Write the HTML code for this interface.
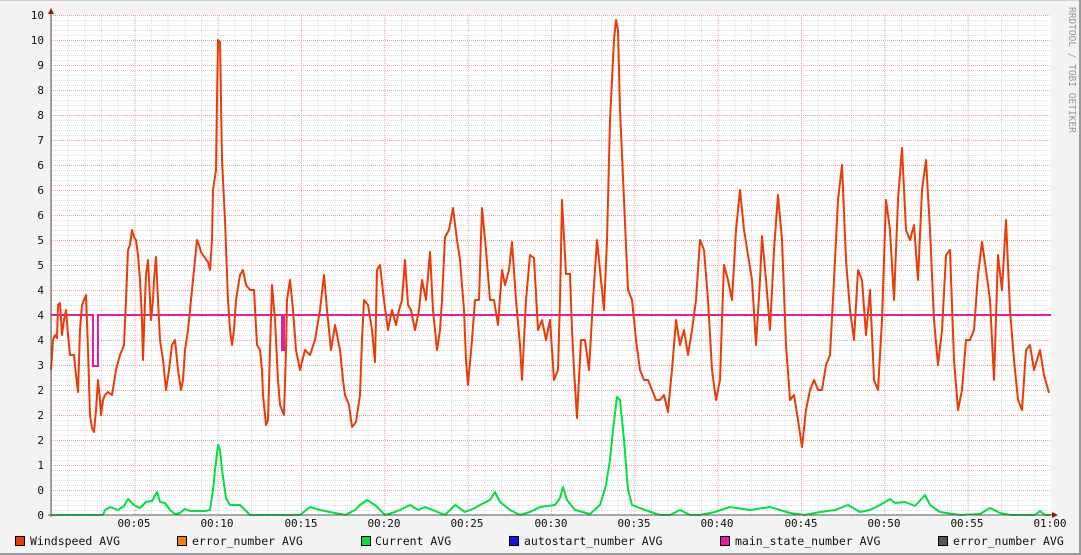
<!DOCTYPE html>
<html><head><meta charset="utf-8"><style>
html,body{margin:0;padding:0;background:#f3f3f3;}
svg{display:block;font-family:"DejaVu Sans Mono","Liberation Mono",monospace;}
</style></head><body>
<svg width="1081" height="555" viewBox="0 0 1081 555" xmlns="http://www.w3.org/2000/svg">
<rect x="0" y="0" width="1081" height="555" fill="#f3f3f3"/>
<rect x="0" y="0" width="1081" height="1" fill="#d0d0d0"/>
<rect x="1079" y="0" width="2" height="555" fill="#9a9a9a"/>
<rect x="0" y="553" width="1081" height="2" fill="#9a9a9a"/>
<rect x="51" y="15" width="1000" height="500" fill="#ffffff"/>
<defs>
<pattern id="mh" x="51" y="15" width="1000" height="5" patternUnits="userSpaceOnUse"><line x1="0" y1="0.5" x2="1000" y2="0.5" stroke="#dcdcdc" stroke-dasharray="1,1"/></pattern>
<pattern id="mv" x="51" y="15" width="16.667" height="500" patternUnits="userSpaceOnUse"><line x1="0.5" y1="0" x2="0.5" y2="500" stroke="#dcdcdc" stroke-dasharray="1,1"/></pattern>
<pattern id="Mh" x="51" y="15" width="1000" height="25" patternUnits="userSpaceOnUse"><line x1="0" y1="0.5" x2="1000" y2="0.5" stroke="#eba5a5" stroke-dasharray="1,1"/></pattern>
<pattern id="Mv" x="51" y="15" width="83.333" height="500" patternUnits="userSpaceOnUse"><line x1="0.5" y1="0" x2="0.5" y2="500" stroke="#eba5a5" stroke-dasharray="1,1"/></pattern>
</defs>
<rect x="51" y="15" width="1000" height="500" fill="url(#mh)"/>
<rect x="51" y="15" width="1000" height="500" fill="url(#mv)"/>
<rect x="51" y="15" width="1000" height="500" fill="url(#Mh)"/>
<rect x="51" y="15" width="1000" height="500" fill="url(#Mv)"/>
<g font-size="11" fill="#111" text-anchor="end">
<text x="44" y="19">10</text><text x="44" y="44">10</text><text x="44" y="69">9</text><text x="44" y="94">8</text><text x="44" y="119">8</text><text x="44" y="144">7</text><text x="44" y="169">6</text><text x="44" y="194">6</text><text x="44" y="219">6</text><text x="44" y="244">5</text><text x="44" y="269">5</text><text x="44" y="294">4</text><text x="44" y="319">4</text><text x="44" y="344">4</text><text x="44" y="369">3</text><text x="44" y="394">2</text><text x="44" y="419">2</text><text x="44" y="444">2</text><text x="44" y="469">1</text><text x="44" y="494">0</text><text x="44" y="519">0</text>
</g>
<g font-size="11" fill="#111" text-anchor="middle">
<text x="134" y="527">00:05</text><text x="217" y="527">00:10</text><text x="301" y="527">00:15</text><text x="384" y="527">00:20</text><text x="467" y="527">00:25</text><text x="551" y="527">00:30</text><text x="634" y="527">00:35</text><text x="717" y="527">00:40</text><text x="801" y="527">00:45</text><text x="884" y="527">00:50</text><text x="967" y="527">00:55</text><text x="1050" y="527">01:00</text>
</g>
<text transform="translate(1069,7) rotate(90)" font-size="9.5" fill="#999">RRDTOOL / TOBI OETIKER</text>
<polyline fill="none" stroke="#00e040" stroke-width="2" stroke-linejoin="round" points="51,515 103,515 105,510 110,507 118,510 124,506 128,499 134,505 140,508 146,502 152,501 157,492 160,502 165,503 170,510 175,514 180,513 185,509 190,511 205,511 210,510 213,490 215,470 218,445 220,450 222,470 226,498 230,505 240,505 245,510 250,515 300,515 305,511 310,507 320,510 330,512 345,515 355,510 360,505 367,500 375,505 385,515 395,512 400,510 410,505 418,510 425,507 435,511 445,515 450,510 455,505 465,512 475,508 480,505 490,500 495,492 500,502 510,510 520,515 530,512 540,507 555,505 560,498 563,487 567,500 575,510 590,514 600,505 606,485 610,460 613,430 617,397 620,400 622,420 624,440 628,490 632,505 645,510 660,515 670,515 680,510 690,515 700,515 715,512 730,507 750,510 770,507 790,513 805,515 820,512 835,510 848,505 860,512 870,510 880,505 890,499 895,503 905,502 915,506 925,495 930,505 940,512 960,515 980,514 990,508 1000,513 1010,515 1035,515 1040,511 1045,515 1051,515"/>
<polyline fill="none" stroke="#e41ea0" stroke-width="2" points="51,315 93,315 93,366 98,366 98,315 282,315 282,350 284,350 284,315 1051,315"/>
<polyline fill="none" stroke="#e83c0a" stroke-width="2" stroke-linejoin="round" points="51,370 53,340 55,335 57,338 58,305 60,303 62,335 64,320 66,310 68,335 70,355 74,355 76,375 78,392 80,330 82,305 86,295 88,350 90,415 92,428 94,432 96,410 98,380 100,400 101,415 103,400 105,395 108,392 112,395 116,370 120,355 124,345 126,300 128,250 130,245 132,230 134,237 136,240 138,255 140,280 142,320 143,360 145,300 146,275 148,260 151,320 153,300 154,280 156,257 158,300 160,340 163,360 166,390 169,370 172,345 175,340 178,370 181,390 183,380 185,350 188,330 191,300 193,280 197,240 199,245 201,252 205,258 208,262 210,270 212,240 213,190 216,170 217,100 218,40 220,42 221,100 222,160 225,220 228,300 230,330 232,345 234,330 236,300 240,275 243,270 246,285 250,290 254,290 257,345 260,350 262,370 263,395 266,425 268,420 270,350 272,285 275,320 278,380 280,405 284,415 286,350 287,300 290,280 293,310 296,350 300,370 305,350 310,355 315,340 320,310 324,275 327,310 331,350 335,325 340,350 343,380 345,395 349,405 352,427 356,422 360,395 362,340 364,300 368,305 372,330 375,362 377,270 380,265 384,300 388,330 392,310 396,325 399,310 402,300 405,260 408,305 411,310 415,330 419,310 422,280 426,300 430,252 433,310 437,350 440,330 442,300 445,237 449,230 453,208 457,240 460,260 464,310 466,360 468,385 472,340 475,300 479,300 482,208 486,250 490,300 494,300 498,325 502,270 505,285 509,270 512,242 516,300 520,345 522,380 526,300 530,255 534,258 538,330 542,320 546,340 550,320 554,380 558,370 560,300 562,200 566,274 570,274 572,330 574,370 577,418 581,340 585,340 589,370 593,300 597,240 600,270 604,310 607,240 610,120 614,40 616,20 618,30 620,110 624,200 628,290 632,300 636,340 640,370 644,380 648,380 652,390 656,400 660,400 664,395 668,412 670,390 672,370 676,320 680,345 684,330 688,355 692,330 696,300 700,240 704,250 708,300 712,370 716,400 720,380 722,320 724,265 728,280 732,300 736,230 740,190 744,230 748,255 752,280 756,345 760,280 762,236 766,280 770,330 774,250 778,195 782,240 786,345 790,400 794,395 798,420 802,447 806,410 810,390 814,380 818,390 822,390 826,365 830,355 834,280 838,200 842,165 846,260 850,310 854,340 858,270 862,280 866,335 870,290 874,380 878,390 882,320 886,200 890,230 894,300 898,200 902,148 906,230 910,240 914,225 918,280 922,190 926,160 930,230 934,320 938,365 942,330 946,255 950,250 954,360 958,410 962,390 966,340 970,340 974,330 978,275 982,242 986,270 990,300 994,380 998,255 1002,290 1006,220 1010,310 1014,360 1018,400 1022,410 1026,350 1030,345 1034,370 1040,350 1044,375 1049,393"/>
<line x1="51" y1="10" x2="51" y2="517" stroke="#555" stroke-width="1"/>
<line x1="48" y1="515" x2="1056" y2="515" stroke="#555" stroke-width="1"/>
<polygon points="48,14 54,14 51,8" fill="#a01010"/>
<polygon points="1052,512 1052,518 1058,515" fill="#a01010"/>
<g font-size="11.5" fill="#111">
<rect x="15.5" y="536.5" width="9" height="9" fill="#e83c0a" stroke="#000"/><text x="30" y="545">Windspeed AVG</text>
<rect x="177.5" y="536.5" width="9" height="9" fill="#f08010" stroke="#000"/><text x="192" y="545">error_number AVG</text>
<rect x="361.5" y="536.5" width="9" height="9" fill="#00e040" stroke="#000"/><text x="375" y="545">Current AVG</text>
<rect x="509.5" y="536.5" width="9" height="9" fill="#1010f0" stroke="#000"/><text x="524" y="545">autostart_number AVG</text>
<rect x="720.5" y="536.5" width="9" height="9" fill="#e41ea0" stroke="#000"/><text x="735" y="545">main_state_number AVG</text>
<rect x="938.5" y="536.5" width="9" height="9" fill="#555" stroke="#000"/><text x="953" y="545">error_number AVG</text>
</g>
</svg>
</body></html>
